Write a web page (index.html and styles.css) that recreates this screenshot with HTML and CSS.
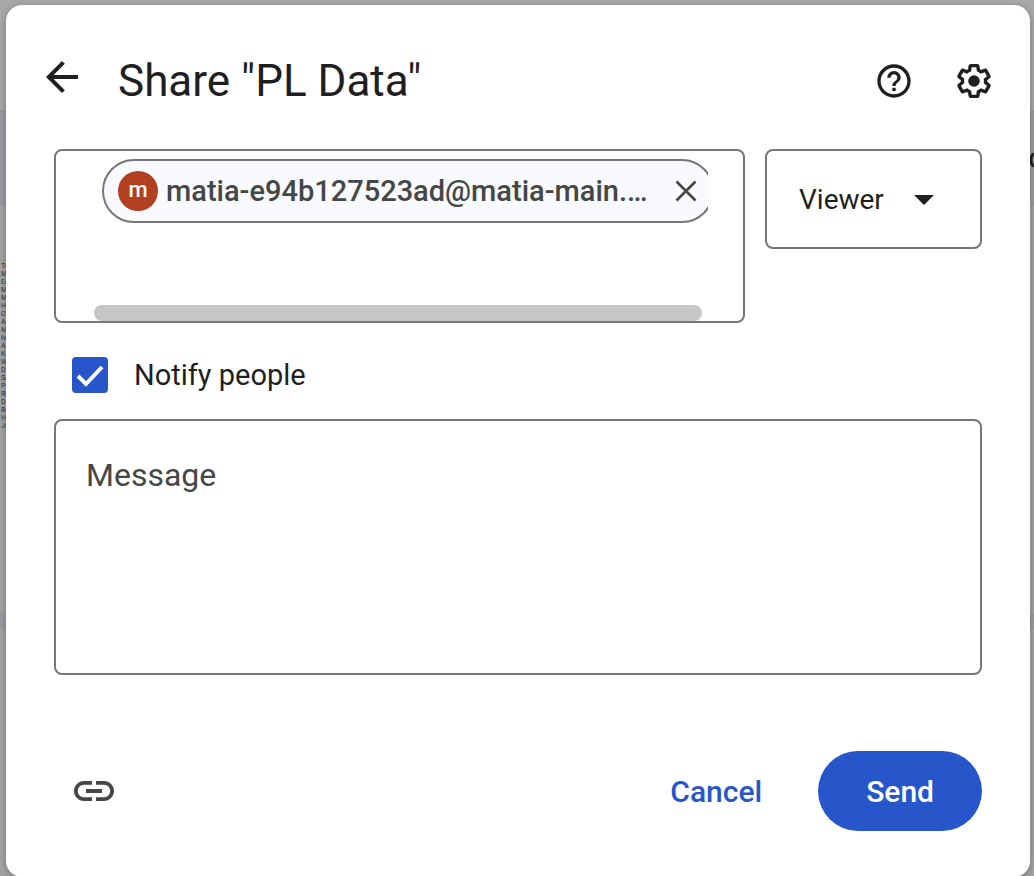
FILE: index.html
```html
<!DOCTYPE html>
<html lang="en">
<head>
<meta charset="utf-8">
<meta name="viewport" content="width=device-width, initial-scale=1">
<title>Share "PL Data"</title>
<link rel="stylesheet" href="styles.css">
</head>
<body>
<div class="backdrop" aria-hidden="true">
  <div class="backdrop-top"></div>
  <div class="backdrop-band"><svg width="4" height="16" viewBox="0 0 4 16"><path d="M4 2C0 3 0 13 4 14" fill="none" stroke="currentColor" stroke-width="3"/></svg></div>
  <div class="backdrop-sheet">To<br>Me<br>Ed<br>Me<br>Me<br>He<br>Cl<br>An<br>Me<br>Iv<br>As<br>Ka<br>We<br>Da<br>Se<br>Pr<br>Ri<br>De<br>Be<br>Ha<br>Ja</div>
  <div class="backdrop-tabs"></div>
  <div class="backdrop-rest"></div>
</div>
<form class="dialog" role="dialog" aria-labelledby="dialog-title">
  <header class="header">
    <button class="icon-button back" type="button" aria-label="Back">
      <svg width="48" height="48" viewBox="0 0 24 24"><path d="M20 11H7.83l5.59-5.59L12 4l-8 8 8 8 1.41-1.41L7.83 13H20v-2z"/></svg>
    </button>
    <h1 class="title" id="dialog-title">Share "PL Data"</h1>
    <button class="icon-button" type="button" aria-label="Help">
      <svg width="40" height="40" viewBox="0 0 24 24"><path d="M11 18h2v-2h-2v2zm1-16C6.48 2 2 6.48 2 12s4.48 10 10 10 10-4.480 10-10S17.520 2 12 2zm0 18c-4.410 0-8-3.590-8-8s3.590-8 8-8 8 3.590 8 8-3.590 8-8 8zm0-14c-2.210 0-4 1.790-4 4h2c0-1.100.9-2 2-2s2 .9 2 2c0 2-3 1.750-3 5h2c0-2.250 3-2.500 3-5 0-2.210-1.790-4-4-4z"/></svg>
    </button>
    <button class="icon-button" type="button" aria-label="Settings">
      <svg width="40" height="40" viewBox="0 0 24 24"><path d="M13.85 22.25h-3.7c-.74 0-1.36-.54-1.45-1.27l-.27-1.89c-.27-.14-.53-.29-.79-.46l-1.8.72c-.7.26-1.47-.03-1.81-.65L2.2 15.53c-.35-.66-.2-1.44.36-1.88l1.53-1.19c-.01-.15-.02-.3-.02-.46 0-.15.01-.31.02-.46l-1.52-1.19c-.59-.45-.74-1.26-.37-1.88l1.85-3.19c.34-.62 1.11-.9 1.79-.63l1.81.73c.26-.17.52-.32.78-.46l.27-1.91c.09-.7.71-1.25 1.44-1.25h3.7c.74 0 1.36.54 1.45 1.27l.27 1.89c.27.14.53.29.79.46l1.8-.72c.71-.26 1.48.03 1.82.65l1.84 3.18c.36.66.2 1.44-.36 1.88l-1.52 1.19c.01.15.02.3.02.46s-.01.31-.02.46l1.52 1.19c.56.45.72 1.23.37 1.86l-1.86 3.22c-.34.62-1.11.9-1.8.63l-1.8-.72c-.26.17-.52.32-.78.46l-.27 1.91c-.1.68-.72 1.22-1.46 1.22zm-3.23-2h2.76l.37-2.55.53-.22c.44-.18.88-.44 1.34-.78l.45-.34 2.38.96 1.38-2.4-2.03-1.58.07-.56c.03-.26.06-.51.06-.78s-.03-.53-.06-.78l-.07-.56 2.03-1.58-1.39-2.4-2.39.96-.45-.35c-.42-.32-.87-.58-1.33-.77l-.52-.22-.37-2.55h-2.76l-.37 2.55-.53.21c-.44.19-.88.44-1.34.79l-.45.33-2.38-.95-1.39 2.39 2.03 1.58-.07.56a7 7 0 0 0-.06.79c0 .26.02.53.06.78l.07.56-2.03 1.58 1.38 2.4 2.39-.96.45.35c.43.33.86.58 1.33.77l.53.22.38 2.55z"/><circle cx="12" cy="12" r="3.5"/></svg>
    </button>
  </header>

  <div class="recipients">
    <div class="people-box">
      <div class="people-scroll">
        <div class="chip">
          <span class="avatar">m</span>
          <span class="chip-text">matia-e94b127523ad@matia-main.…</span>
          <button class="chip-remove" type="button" aria-label="Remove">
            <svg width="32" height="32" viewBox="0 0 32 32"><path d="M6.500 6.500l19 19m0-19l-19 19" fill="none" stroke="currentColor" stroke-width="2.600"/></svg>
          </button>
        </div>
        <div class="scroll-thumb"></div>
      </div>
    </div>
    <div class="role">
      <select class="role-select" aria-label="Role"><option>Viewer</option></select>
      <svg class="role-arrow" width="20" height="10" viewBox="0 0 20 10"><path d="M0 0h20L10 10z"/></svg>
    </div>
  </div>

  <label class="notify"><input class="notify-box" type="checkbox" checked>Notify people</label>

  <textarea class="message" placeholder="Message" aria-label="Message"></textarea>

  <footer class="footer">
    <button class="icon-button copy-link" type="button" aria-label="Copy link">
      <svg width="48" height="48" viewBox="0 0 24 24"><path d="M3.900 12c0-1.710 1.390-3.100 3.100-3.100h4V7H7c-2.760 0-5 2.240-5 5s2.240 5 5 5h4v-1.900H7c-1.710 0-3.100-1.390-3.100-3.100zM8 13h8v-2H8v2zm9-6h-4v1.900h4c1.710 0 3.100 1.390 3.100 3.100s-1.390 3.100-3.100 3.100h-4V17h4c2.760 0 5-2.240 5-5s-2.240-5-5-5z"/></svg>
    </button>
    <button class="cancel" type="button">Cancel</button>
    <button class="send" type="submit">Send</button>
  </footer>
</form>
</body>
</html>
```
FILE: styles.css
```css
* { box-sizing: border-box; }

body {
  margin: 0;
  height: 100vh;
  overflow: hidden;
  background: #a9a9a9;
  color: #1f1f1f;
  font-family: Roboto, sans-serif;
}

button {
  margin: 0;
  padding: 0;
  border: 0;
  background: none;
  color: inherit;
  font-family: inherit;
  cursor: pointer;
}

svg { display: block; fill: currentColor; }

.backdrop {
  position: absolute;
  inset: 0;
  display: flex;
  flex-direction: column;
}

.backdrop-top { height: 110px; }

.backdrop-band {
  display: flex;
  justify-content: flex-end;
  height: 96px;
  padding-top: 42px;
  background: #9b9da1;
}

.backdrop-sheet {
  height: 407px;
  padding: 56px 0 0 1px;
  background: #a5a5a5;
  color: #333;
  font-size: 7px;
  line-height: 8px;
}

.backdrop-tabs {
  height: 16px;
  background: #9b9da1;
}

.backdrop-rest {
  flex: 1;
  background: #a5a5a5;
}

.dialog {
  position: relative;
  margin: 5px 4px 0 6px;
  padding: 48px 48px 46px;
  border-radius: 16px;
  background: #fff;
  box-shadow: 0 2px 8px rgba(0, 0, 0, 0.3);
}

.header {
  display: flex;
  align-items: center;
  gap: 40px;
  height: 56px;
  margin: 0 -12px 40px -16px;
}

.icon-button { flex: none; }

.back { margin-bottom: 8px; }

.title {
  flex: 1;
  margin: 0 0 0 -8px;
  font-size: 44px;
  font-weight: 400;
  line-height: 56px;
}

.recipients {
  display: grid;
  grid-template-columns: 1fr 217px;
  align-items: start;
  gap: 20px;
}

.people-box {
  min-width: 0;
  padding: 0 35px 0 38px;
  border: 2px solid #747775;
  border-radius: 8px;
}

.people-scroll {
  display: flex;
  flex-direction: column;
  justify-content: space-between;
  height: 170px;
  padding: 8px 0 0 8px;
  overflow: hidden;
}

.chip {
  display: flex;
  flex: none;
  align-items: center;
  gap: 8px;
  width: 612px;
  height: 64px;
  padding: 0 10px 0 14px;
  border: 2px solid #747775;
  border-radius: 32px;
  background: #f8fafd;
  color: #444746;
}

.avatar {
  flex: none;
  width: 40px;
  height: 40px;
  border-radius: 50%;
  background: #b14021;
  color: #fff;
  font-size: 22px;
  font-weight: 500;
  line-height: 38px;
  text-align: center;
}

.chip-text {
  flex: 1;
  font-size: 29px;
  font-weight: 500;
  line-height: 36px;
  white-space: nowrap;
}

.scroll-thumb {
  height: 16px;
  margin: 0 6px 0 -8px;
  border-radius: 8px;
  background: #c6c6c6;
}

.role { position: relative; }

.role-select {
  display: block;
  width: 100%;
  height: 100px;
  padding: 0 64px 0 32px;
  border: 2px solid #747775;
  border-radius: 8px;
  appearance: none;
  background: #fff;
  color: #1f1f1f;
  font-family: inherit;
  font-size: 28px;
}

.role-arrow {
  position: absolute;
  top: 46px;
  right: 48px;
  pointer-events: none;
}

.notify {
  display: flex;
  align-items: center;
  gap: 26px;
  width: max-content;
  margin: 34px 0 26px 18px;
  font-size: 29px;
  line-height: 36px;
}

.notify-box {
  width: 36px;
  height: 36px;
  margin: 0;
  border-radius: 4px;
  appearance: none;
  background: #2656c9 url("data:image/svg+xml,%3Csvg xmlns='http://www.w3.org/2000/svg' viewBox='0 0 36 36'%3E%3Cpath d='M6 19l8 8L30 10' fill='none' stroke='white' stroke-width='4'/%3E%3C/svg%3E");
}

.message {
  display: block;
  width: 100%;
  height: 256px;
  padding: 34px 30px;
  border: 2px solid #747775;
  border-radius: 8px;
  resize: none;
  color: #1f1f1f;
  font-family: inherit;
  font-size: 32px;
  line-height: 40px;
}

.message::placeholder { color: #444746; opacity: 1; }

.footer {
  display: flex;
  align-items: center;
  gap: 56px;
  margin: 76px 0 0 16px;
}

.copy-link { margin-right: auto; color: #444746; }

.cancel,
.send {
  font-size: 30px;
  font-weight: 500;
}

.cancel { color: #2656c9; }

.send {
  height: 80px;
  padding: 0 48px;
  border-radius: 40px;
  background: #2656c9;
  color: #fff;
}
```
